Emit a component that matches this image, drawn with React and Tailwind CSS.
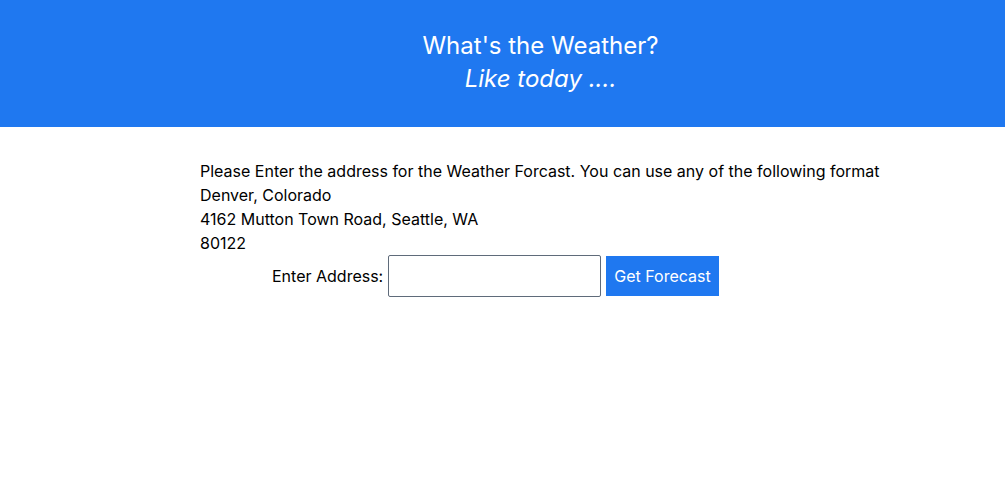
export default function App() {
  return (
    <div className="min-h-screen bg-white font-['Inter','Liberation_Sans',sans-serif] text-black">
      <header className="h-[127px] bg-[#1f78f0] flex flex-col items-center justify-center pl-[76px] text-white text-[24px] leading-[33px] pb-[3px]">
        <div>What's the Weather?</div>
        <div className="italic">Like today ....</div>
      </header>

      <main className="pl-[200px] pt-[32px] text-[16px] leading-[24px]">
        <div>Please Enter the address for the Weather Forcast. You can use any of the following format</div>
        <div>Denver, Colorado</div>
        <div>4162 Mutton Town Road, Seattle, WA</div>
        <div>80122</div>

        <form className="flex items-center pl-[72px]" onSubmit={e => e.preventDefault()}>
          <label className="mr-[5px]">Enter Address:</label>
          <input type="text" className="w-[213px] h-[42px] border border-[#5f6b7a] rounded-[2px] px-2 outline-none" />
          <button type="submit" className="ml-[5px] h-[40px] px-[8px] bg-[#1f78f0] text-white">
            Get Forecast
          </button>
        </form>
      </main>
    </div>
  )
}
